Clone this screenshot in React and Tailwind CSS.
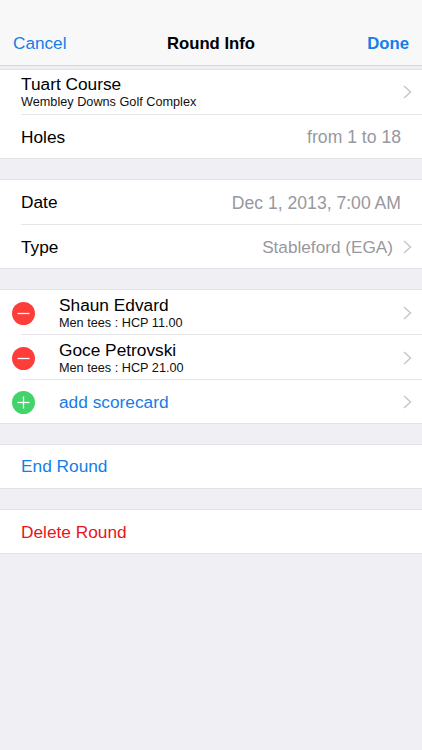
const font = { fontFamily: '"Liberation Sans", Arial, sans-serif' };

function Chevron() {
    return (
        <svg className="w-[9px] h-[14px] shrink-0" viewBox="0 0 9 14" fill="none" stroke="#c7c7cc" strokeWidth={1.5}>
            <path d="M1 1 L7.5 7 L1 13" />
        </svg>
    );
}

function Badge({ add }) {
    return (
        <div className={`w-[23px] h-[23px] mt-[1px] rounded-full shrink-0 flex items-center justify-center ${add ? 'bg-[#42d469]' : 'bg-[#fc3d39]'}`}>
            <svg className="w-[23px] h-[23px]" viewBox="0 0 23 23" stroke="#ffffff" strokeWidth={1.3}>
                <path d="M5.5 11.5 H17.5" />
                {add && <path d="M11.5 5.5 V17.5" />}
            </svg>
        </div>
    );
}

function Section({ children, className = '' }) {
    return (
        <div className={`bg-white border-t border-b border-[#e2e2e6] ${className}`}>
            {children}
        </div>
    );
}

function Title({ title, sub, titleClass = 'text-black' }) {
    return (
        <div className="flex-1 min-w-0">
            <div className={`text-[17.3px] leading-[20px] ${titleClass}`}>{title}</div>
            {sub && <div className="text-[12.7px] leading-[15px] mt-[1px] text-[#111]">{sub}</div>}
        </div>
    );
}

function Row({ title, sub, value, valueClass = 'text-[17.6px]', chevron, divider, titleClass, heightClass = 'h-[43px]' }) {
    return (
        <div className={`pl-[21px] ${heightClass}`}>
            <div className={`h-full flex items-center pr-[10px] ${divider ? 'border-b border-[#e6e6e8]' : ''}`}>
                <Title title={title} sub={sub} titleClass={titleClass} />
                {value && <span className={`leading-[20px] mt-[1px] text-[#98989d] ${valueClass} ${chevron ? 'mr-[10px]' : 'mr-[11px]'}`}>{value}</span>}
                {chevron && <Chevron />}
            </div>
        </div>
    );
}

function PlayerRow({ add, title, sub, heightClass }) {
    return (
        <div className={`flex items-center pl-[12px] relative ${heightClass}`}>
            <Badge add={add} />
            <div className="flex-1 ml-[24px] flex items-center pr-[10px]">
                <Title title={title} sub={sub} titleClass={add ? 'text-[#147ee6]' : 'text-black'} />
                <Chevron />
            </div>
            {!add && <div className="absolute left-[21px] right-0 bottom-0 border-b border-[#e6e6e8]" />}
        </div>
    );
}

export default function App() {
    return (
        <div className="w-[422px] h-[750px] bg-[#efeff4] overflow-hidden" style={font}>
            <div className="h-[66px] bg-[#f8f8f8] border-b border-[#d6d6da] pt-[23px] px-[13px] flex items-center">
                <span className="flex-1 text-[17.2px] text-[#147ee6]">Cancel</span>
                <span className="text-[16.7px] font-bold text-black">Round Info</span>
                <span className="flex-1 text-right text-[16.7px] font-bold text-[#147ee6]">Done</span>
            </div>

            <Section className="mt-[3px]">
                <Row title="Tuart Course" sub="Wembley Downs Golf Complex" chevron divider heightClass="h-[45px]" />
                <Row title="Holes" value="from 1 to 18" />
            </Section>

            <Section className="mt-[20px]">
                <Row title="Date" value="Dec 1, 2013, 7:00 AM" divider heightClass="h-[45px]" />
                <Row title="Type" value="Stableford (EGA)" valueClass="text-[17.2px]" chevron />
            </Section>

            <Section className="mt-[20px]">
                <PlayerRow title="Shaun Edvard" sub="Men tees : HCP 11.00" heightClass="h-[45px]" />
                <PlayerRow title="Goce Petrovski" sub="Men tees : HCP 21.00" heightClass="h-[45px]" />
                <PlayerRow title="add scorecard" add heightClass="h-[43px]" />
            </Section>

            <Section className="mt-[20px]">
                <div className="pb-[1px]">
                    <Row title="End Round" titleClass="text-[#147ee6]" heightClass="h-[42px]" />
                </div>
            </Section>

            <Section className="mt-[20px]">
                <Row title="Delete Round" titleClass="text-[#e8141c]" />
            </Section>
        </div>
    );
}
